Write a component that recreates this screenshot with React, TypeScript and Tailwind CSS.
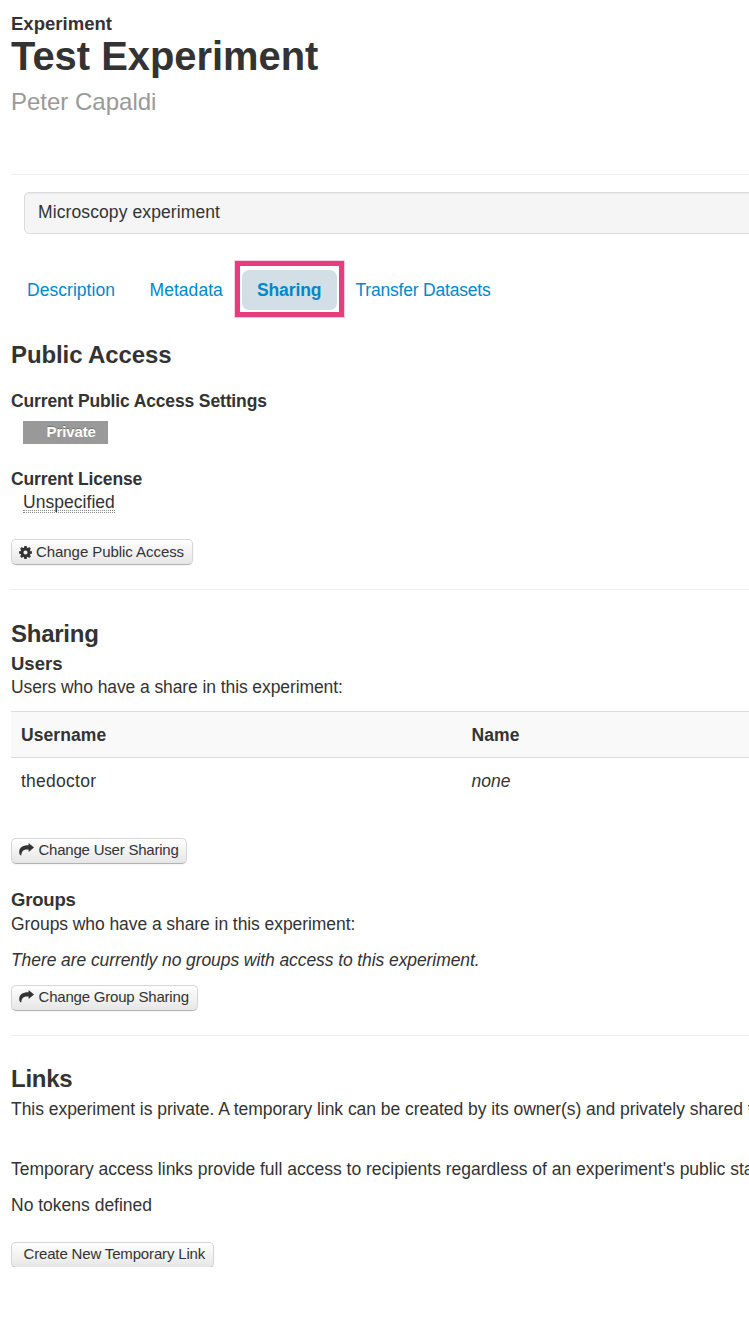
import type { ReactNode } from "react";

function Cog() {
  const teeth = [0, 45, 90, 135, 180, 225, 270, 315];
  return (
    <svg className="relative left-[-0.5px] block h-[13px] w-[13px] shrink-0" viewBox="-7 -7 14 14" fill="#333333">
      {teeth.map((angle) => (
        <path key={angle} d="M-1.7 -4L-1.3 -6.9H1.3L1.7 -4Z" transform={`rotate(${angle})`} />
      ))}
      <path
        fillRule="evenodd"
        d="M0 -5.3A5.3 5.3 0 1 1 0 5.3A5.3 5.3 0 1 1 0 -5.3ZM0 -2.2A2.2 2.2 0 1 0 0 2.2A2.2 2.2 0 1 0 0 -2.2Z"
      />
    </svg>
  );
}

function ShareArrow() {
  return (
    <svg className="relative left-[-0.5px] block h-[13px] w-[15px] shrink-0" viewBox="0 0 15 13" fill="#333333">
      <path d="M9.6 0L15 4.5L9.6 9V6.5C5.4 6.1 2.4 7.2 2.3 12.6C1 12 0.3 10.9 0.2 9.4C0 4.8 3.8 2.2 9.6 2.3Z" />
    </svg>
  );
}

function Button({ className, icon, children }: { className: string; icon?: ReactNode; children: ReactNode }) {
  return (
    <button
      className={`flex items-center rounded-[5px] border border-[#d6d6d6] border-b-[#b3b3b3] bg-linear-to-b from-white to-[#e6e6e6] text-[15px] leading-[22px] whitespace-nowrap shadow-[inset_0_1px_0_rgba(255,255,255,0.2),0_1px_2px_rgba(0,0,0,0.05)] ${className}`}
    >
      {icon}
      <span>{children}</span>
    </button>
  );
}

const rule = "h-px border-0 bg-[#eeeeee]";

export default function App() {
  return (
    <main className="h-[1319px] w-[749px] overflow-hidden bg-white pt-[12px] pl-[11px] font-['Liberation_Sans',Arial,sans-serif] text-[17.5px] leading-[25px] whitespace-nowrap text-[#333333]">
      <header>
        <div className="text-[18.5px] leading-[24px] font-bold tracking-[0.02px]">Experiment</div>
        <h1 className="text-[39.9px] leading-[40px] font-bold">Test Experiment</h1>
        <h2 className="mt-[6px] text-[24px] leading-[40px] text-[#999999]">Peter Capaldi</h2>
      </header>
      <hr className={`mt-[52px] ${rule}`} />
      <div className="mt-[17px] ml-[13px] h-[42px] w-[760px] rounded-[5px] border border-[#dcdcdc] bg-[#f5f5f5] pt-[7px] pl-[13px] tracking-[0.1px] shadow-[inset_0_1px_1px_rgba(0,0,0,0.05)]">
        Microscopy experiment
      </div>

      <nav className="mt-[27px] flex h-[56px] items-center text-[#0088cc]">
        <a className="ml-[16px] w-[122.5px] pt-[2px] tracking-[0.04px]">Description</a>
        <a className="w-[85.5px] pt-[2px] tracking-[0.05px]">Metadata</a>
        <a className="flex h-[56px] w-[109px] shrink-0 items-center border-5 border-[#e73c7e] pt-[2px] pl-[2px] font-bold tracking-[-0.12px] shadow-[0_0_0_1px_rgba(231,60,126,0.25)]">
          <span className="flex h-[40px] w-[95px] items-center rounded-[7px] bg-[#d3dfe6] pl-[15px]">Sharing</span>
        </a>
        <a className="ml-[11.5px] pt-[2px] tracking-[-0.2px]">Transfer Datasets</a>
      </nav>

      <section>
        <h3 className="mt-[18px] text-[24px] leading-[40px] font-bold tracking-[-0.1px]">Public Access</h3>
        <h4 className="mt-[14px] font-bold tracking-[-0.14px]">Current Public Access Settings</h4>
        <div className="mt-[7px] ml-[12px] h-[23px] w-[85px] bg-[#999999] pl-[23.5px] text-[15px] leading-[22px] font-bold tracking-[-0.1px] text-white [text-shadow:0_-1px_0_rgba(0,0,0,0.25)]">
          Private
        </div>
        <h4 className="mt-[24px] leading-[23px] font-bold tracking-[-0.14px]">Current License</h4>
        <div className="ml-[12px] flex h-[22px] leading-[23px]">
          <span className="h-[20px] border-b border-dotted border-[#888888]">
            <span className="block h-[22px] border-b border-dotted border-[#888888] tracking-[0.04px]">Unspecified</span>
          </span>
        </div>
        <Button className="mt-[26px] h-[26px] w-[182px] gap-[3.5px] pl-[7.5px] tracking-[-0.06px]" icon={<Cog />}>
          Change Public Access
        </Button>
      </section>
      <hr className={`mt-[24px] ${rule}`} />

      <section>
        <h3 className="mt-[25px] text-[24px] leading-[38px] font-bold tracking-[-0.25px]">Sharing</h3>
        <h4 className="text-[18.5px] leading-[22px] font-bold">Users</h4>
        <p className="tracking-[-0.09px]">Users who have a share in this experiment:</p>
        <table className="mt-[11px] w-[920px] table-fixed border-collapse text-left">
          <thead>
            <tr className="h-[46px] border-y border-[#dddddd] bg-[#f9f9f9]">
              <th className="w-[450px] pt-[2px] pl-[10px] tracking-[0.07px]">Username</th>
              <th className="pt-[2px] pl-[10.5px] tracking-[0.1px]">Name</th>
            </tr>
          </thead>
          <tbody>
            <tr className="h-[46px]">
              <td className="pt-[2px] pl-[10px] tracking-[0.25px]">thedoctor</td>
              <td className="pt-[2px] pl-[10.5px] italic">none</td>
            </tr>
          </tbody>
        </table>
        <Button className="mt-[34px] h-[26px] w-[176px] gap-[4px] pb-[2px] pl-[7.5px] tracking-[-0.22px]" icon={<ShareArrow />}>
          Change User Sharing
        </Button>
        <h4 className="mt-[24px] text-[18.5px] leading-[24px] font-bold tracking-[-0.2px]">Groups</h4>
        <p className="tracking-[-0.07px]">Groups who have a share in this experiment:</p>
        <p className="mt-[11px] tracking-[-0.085px] italic">There are currently no groups with access to this experiment.</p>
        <Button className="mt-[12px] h-[26px] w-[187px] gap-[4px] pb-[2px] pl-[7.5px] tracking-[-0.2px]" icon={<ShareArrow />}>
          Change Group Sharing
        </Button>
      </section>
      <hr className={`mt-[24px] ${rule}`} />

      <section>
        <h3 className="mt-[24px] text-[24px] leading-[37px] font-bold tracking-[-0.25px]">Links</h3>
        <p className="tracking-[-0.035px]">
          This experiment is private. A temporary link can be created by its owner(s) and privately shared to
        </p>
        <p className="mt-[35px]">
          Temporary access links provide full access to recipients regardless of an experiment's public status
        </p>
        <p className="mt-[11px]">No tokens defined</p>
        <div className="mt-[24px] h-[25px] overflow-hidden">
          <Button className="h-[26px] w-[203px] pb-[2px] pl-[11.5px] tracking-[-0.16px]">Create New Temporary Link</Button>
        </div>
      </section>
    </main>
  );
}
